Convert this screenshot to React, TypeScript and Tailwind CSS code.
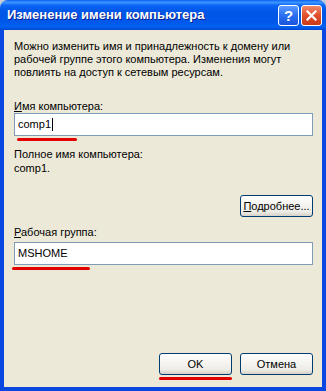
import React from 'react';

const font = { fontFamily: '"Liberation Sans", Arial, sans-serif' };

const XpButton = ({ children, className = '' }: { children: React.ReactNode; className?: string }) => (
  <button
    className={`h-[22px] w-[73px] rounded-[3px] border border-[#003C74] bg-[linear-gradient(180deg,#ffffff_0%,#f5f4ef_45%,#ecebe5_80%,#d6d0c5_100%)] text-[11px] leading-[13px] text-black ${className}`}
  >
    {children}
  </button>
);

const App = () => {
  return (
    <div className="w-[326px] h-[391px] bg-[#c9cdd6] text-black" style={font}>
      <div className="flex h-full flex-col overflow-hidden rounded-t-[8px]">
        {/* Title bar */}
        <div className="flex h-[30px] shrink-0 items-center bg-[linear-gradient(180deg,#0a61f2_0%,#3d95ff_8%,#0a64f4_18%,#0056e6_40%,#0058ea_75%,#0262f2_88%,#0048d2_100%)] pl-[7px] pr-[4px]">
          <span className="flex-1 text-[13px] font-bold text-white [text-shadow:1px_1px_0_#0a1f8f]">
            Изменение имени компьютера
          </span>
          <div className="flex items-center gap-[2px]">
            <div className="flex h-[21px] w-[21px] items-center justify-center rounded-[3px] border border-white bg-[linear-gradient(180deg,#5c9bff_0%,#2a6ff2_50%,#1a55dc_100%)] text-[15px] font-bold leading-none text-white">
              ?
            </div>
            <div className="flex h-[21px] w-[21px] items-center justify-center rounded-[3px] border border-white bg-[linear-gradient(180deg,#f08a6a_0%,#e1502c_50%,#c83a18_100%)]">
              <svg width="11" height="11" viewBox="0 0 11 11">
                <path d="M1.5 1.5 L9.5 9.5 M9.5 1.5 L1.5 9.5" stroke="white" strokeWidth="2.2" strokeLinecap="square" />
              </svg>
            </div>
          </div>
        </div>

        {/* Body */}
        <div className="flex flex-1 flex-col border-x-4 border-b-4 border-[#0a46e0] bg-[#ece9d8] pl-[10px] pr-[9px] pt-[10px] pb-[7px] text-[11px] leading-[13px]">
          <p>
            Можно изменить имя и принадлежность к домену или рабочей группе этого компьютера. Изменения могут
            повлиять на доступ к сетевым ресурсам.
          </p>

          <div className="mt-[21px]">
            <span className="underline">И</span>мя компьютера:
          </div>
          <div className="flex h-[23px] items-center border border-[#7f9db9] bg-white pl-[3px]">
            comp1<span className="ml-[1px] inline-block h-[13px] w-[1px] bg-black" />
          </div>
          <div className="ml-[3px] mt-[2px] h-[3px] w-[60px] rounded-full bg-[#e30000]" />

          <div className="mt-[7px]">Полное имя компьютера:</div>
          <div className="mt-[1px]">comp1.</div>

          <div className="mt-[20px] flex justify-end">
            <XpButton>
              <span className="underline">П</span>одробнее...
            </XpButton>
          </div>

          <div className="mt-[9px]">
            <span className="underline">Р</span>абочая группа:
          </div>
          <div className="mt-[3px] flex h-[23px] items-center border border-[#7f9db9] bg-white pl-[3px]">MSHOME</div>
          <div className="ml-[-2px] mt-[2px] h-[3px] w-[78px] rounded-full bg-[#e30000]" />

          <div className="flex-1" />

          <div className="flex justify-end gap-[8px]">
            <XpButton>OK</XpButton>
            <XpButton>Отмена</XpButton>
          </div>
          <div className="flex justify-end pr-[81px]">
            <div className="mt-[2px] h-[3px] w-[73px] rounded-full bg-[#e30000]" />
          </div>
        </div>
      </div>
    </div>
  );
};

export default App;
